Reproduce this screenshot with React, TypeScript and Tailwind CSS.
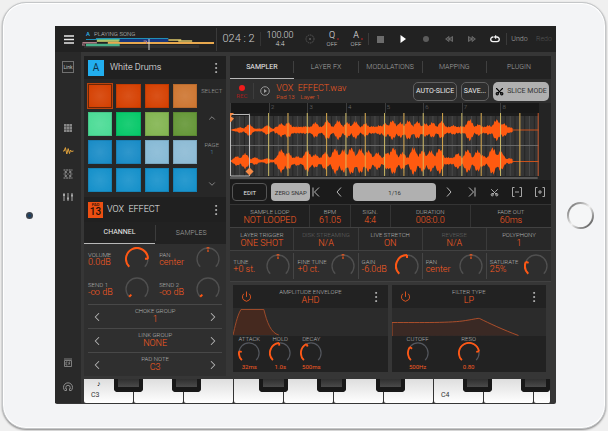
import { useState } from "react";
import { ChevronDown, ChevronLeft, ChevronRight, ChevronUp, EllipsisVertical, Power, Scissors } from "lucide-react";
import clsx from "clsx";

const PADS = [
  "bg-[#d53f00]", "bg-[#d53f00]", "bg-[#d53f00]", "bg-[#cd7530]",
  "bg-[#4adb95]", "bg-[#05c868]", "bg-[#82b450]", "bg-[#649636]",
  "bg-[#188bc6]", "bg-[#188bc6]", "bg-[#86b9d5]", "bg-[#8cbad4]",
  "bg-[#1490ca]", "bg-[#1490ca]", "bg-[#1490ca]", "bg-[#1490ca]",
];

const TOP_PEAKS = [
  [10, 3], [19, 6], [37, 5], [51, 7], [58, 8], [75, 4], [85, 8], [97, 10], [108, 10], [117, 8], [125, 9],
  [135, 7], [142, 4], [149, 5], [155, 7], [162, 10], [170, 8], [178, 10], [187, 9], [195, 7], [202, 8],
  [211, 9], [223, 5], [231, 4], [239, 11], [248, 6], [258, 5], [266, 11], [273, 7], [279, 3],
];
const BOTTOM_PEAKS = [
  [7, 5], [15, 8], [25, 4], [37, 3], [51, 12], [58, 9], [67, 5], [77, 11], [85, 7], [95, 9], [105, 13],
  [113, 12], [121, 14], [130, 13], [138, 11], [147, 9], [157, 9], [163, 14], [172, 9], [183, 14],
  [192, 11], [200, 11], [209, 13], [217, 4], [227, 8], [237, 12], [247, 11], [252, 6], [262, 14], [270, 10], [279, 3],
];

const WHITE_KEYS = ["C3", "", "", "", "", "", "", "C4", "", ""];
const BLACK_KEYS = [30, 88, 175, 233, 292, 379, 437];

function wavePath(peaks: number[][], mid: number) {
  const upper: string[] = [];
  const lower: string[] = [];
  for (let x = 0; x <= 282; x++) {
    let amp = x < 6 ? x / 3 : x > 275 ? (282 - x) / 3 : x < 45 ? 1.5 : 3.5;
    for (const [px, h] of peaks) {
      amp = Math.max(amp, h * Math.exp(-(((x - px) / 4.5) ** 2)));
    }
    const a = amp * (0.9 + 0.16 * Math.sin(x * 2.6));
    const b = amp * (0.9 + 0.16 * Math.cos(x * 2.1));
    upper.push(`${x},${(mid - a).toFixed(1)}`);
    lower.unshift(`${x},${(mid + b).toFixed(1)}`);
  }
  return `M${upper.join("L")}L${lower.join("L")}Z`;
}

function arc(from: number, to: number, r = 11) {
  const point = (v: number) => {
    const a = ((v * 270 - 225) * Math.PI) / 180;
    return `${(12 + r * Math.cos(a)).toFixed(2)} ${(12 + r * Math.sin(a)).toFixed(2)}`;
  };
  return `M${point(from)}A${r} ${r} 0 ${(to - from) * 270 > 180 ? 1 : 0} 1 ${point(to)}`;
}

function Knob({ label, value, center, small }: { label: string; value: number; center?: boolean; small?: boolean }) {
  const [v, setV] = useState(value);
  const a = ((v * 270 - 225) * Math.PI) / 180;
  return (
    <span className={clsx("relative block shrink-0", small ? "size-[22px]" : "size-6")}>
      <svg viewBox="0 0 24 24" fill="none" className="size-full">
        <path d={arc(0, 1)} stroke={small ? "#54575e" : "#505050"} strokeWidth="1.3" />
        {center ? (
          <path d="M12 0v1.6M12 2.6v2.4M10.5 1h3" stroke="#f2581c" strokeWidth="1.2" />
        ) : (
          <>
            {v > 0.02 && <path d={arc(0, v)} stroke="#ff5714" strokeWidth="2" />}
            <path
              d={`M${12 + 11 * Math.cos(a)} ${12 + 11 * Math.sin(a)}L${12 + 8 * Math.cos(a)} ${12 + 8 * Math.sin(a)}`}
              stroke="#ff5714"
              strokeWidth="2"
            />
          </>
        )}
      </svg>
      <input
        type="range"
        min="0"
        max="1"
        step="0.01"
        aria-label={label}
        value={v}
        onChange={(e) => setV(Number(e.target.value))}
        className="absolute inset-0 size-full opacity-0"
      />
    </span>
  );
}

function Info({ label, value, dim, className }: { label: string; value: string; dim?: boolean; className?: string }) {
  return (
    <div className={clsx("flex flex-col items-center justify-center whitespace-nowrap", className)}>
      <span className={clsx("text-[6px] leading-[8px]", dim ? "text-[#646464]" : "text-[#b6b6b6]")}>{label}</span>
      <span className="text-[9px] leading-[9px] text-[#fb5c22]">{value}</span>
    </div>
  );
}

function KnobCell({ label, text, value, center, className }: { label: string; text: string; value: number; center?: boolean; className?: string }) {
  return (
    <div className={clsx("flex items-center justify-between whitespace-nowrap", className)}>
      <div className="w-0">
        <div className="text-[6px] leading-[7px] text-[#b6b6b6]">{label}</div>
        <div className="text-[9px] leading-[9px] text-[#fb5c22]">{text}</div>
      </div>
      <Knob label={label} value={value} center={center} />
    </div>
  );
}

function Stepper({ label, values }: { label: string; values: string[] }) {
  const [i, setI] = useState(0);
  const move = (d: number) => setI((i + d + values.length) % values.length);
  return (
    <div className="mx-1 flex h-6 items-center justify-between border-t border-[#484848] px-[2px] text-[#b5b5b5]">
      <button aria-label={`Previous ${label}`} onClick={() => move(-1)}>
        <ChevronLeft className="size-[14px]" strokeWidth={1.8} />
      </button>
      <Info label={label} value={values[i]} className="pb-[2px]" />
      <button aria-label={`Next ${label}`} onClick={() => move(1)}>
        <ChevronRight className="size-[14px]" strokeWidth={1.8} />
      </button>
    </div>
  );
}

function MoreButton({ label }: { label: string }) {
  return (
    <button aria-label={label} className="text-[#c8c8c8]">
      <EllipsisVertical className="size-[14px]" strokeWidth={1.4} />
    </button>
  );
}

function SideRail() {
  return (
    <nav className="flex w-[26px] shrink-0 flex-col items-center bg-[#292929] pt-[9px] pb-[10px] text-[#a8a8a8]">
      <button className="h-3 w-3 border border-[#707070] text-[5px] leading-[10px] font-normal text-[#bdbdbd]">Link</button>
      <div className="mt-[49px] flex flex-col items-center gap-[11px]">
        <button aria-label="Pads">
          <svg viewBox="0 0 12 12" className="size-3" fill="#868686">
            <rect x="2" y="2" width="8" height="8" />
            <path d="M4.5 2v8M7.5 2v8M2 4.5h8M2 7.5h8" stroke="#404040" strokeWidth=".5" />
          </svg>
        </button>
        <button aria-label="Sampler">
          <svg viewBox="0 0 12 12" className="size-3" fill="none" stroke="#e0a23c" strokeWidth="1" strokeLinejoin="round">
            <path d="M1 6h1.200L3.400 2.600l1.400 6.400L6.200 3.600 7.500 8.500 8.500 5l1 1.500L11.500 6" />
          </svg>
        </button>
        <button aria-label="Patterns">
          <svg viewBox="0 0 12 12" className="size-3" fill="none" stroke="currentColor" strokeWidth=".9">
            <path d="M1.500 2h9M1.500 10h9" strokeDasharray="2 .6" />
            <path d="M1.500 6H4M8 6h2.500M3 3.500h1.500v1.200H3zM7.500 3.500H9v1.200H7.500zM3 7.300h1.500v1.200H3zM7.500 7.300H9v1.200H7.500zM5.200 6h1.600" strokeWidth=".7" />
          </svg>
        </button>
        <button aria-label="Mixer">
          <svg viewBox="0 0 12 12" className="size-3" fill="none" stroke="currentColor" strokeWidth="1">
            <path d="M2 2v8M6 2v8M10 2v8" />
            <path d="M1 4h2M5 7.500h2M9 4.500h2" strokeWidth="2" />
          </svg>
        </button>
      </div>
      <div className="mt-auto flex flex-col items-center gap-3">
        <button aria-label="Effects">
          <svg viewBox="0 0 12 12" className="size-3" fill="none" stroke="#888" strokeWidth=".9">
            <path d="M2.500 3.500h7v6h-7zM2 2h8M5.500 5H4v3h1.500M7 5v3M7 5h1.200M7 6.500h1" />
          </svg>
        </button>
        <button aria-label="Settings">
          <svg viewBox="0 0 12 12" className="size-3" fill="none" stroke="#999" strokeWidth=".9">
            <path d="M3 9.700A4.500 4.500 0 1 1 9 9.700M3.800 8V6.500a2.200 2.200 0 0 1 4.400 0V8M2.800 9.500h1.700V7.500M9.200 9.500H7.500V7.500" />
          </svg>
        </button>
      </div>
    </nav>
  );
}

function TopBar() {
  return (
    <header className="flex h-[26px] items-center bg-[#222222] text-[#cdcdcd]">
      <button aria-label="Menu" className="flex w-[27px] shrink-0 justify-center">
        <svg viewBox="0 0 10 9" className="h-[9px] w-[10px]" stroke="#e8e8e8" strokeWidth="1.4">
          <path d="M0 1h10M0 4.500h10M0 8h10" />
        </svg>
      </button>
      <div className="h-[23px] w-[135px] shrink-0 border-r border-[#3a3a3a]">
        <div className="pt-[2px] pl-1 text-[6px] leading-[8px] text-[#c4c4c4]">
          <b className="mr-1 font-medium text-[#2bb0ec]">A</b>PLAYING SONG
        </div>
        <svg viewBox="0 0 135 12" preserveAspectRatio="none" className="h-3 w-full" fill="none">
          <path d="M2 8.500h116" stroke="#303030" strokeWidth="3" />
          <path d="M4 1.500h12M14 .5h73" stroke="#1f8fb8" strokeWidth="1.200" />
          <path d="M38 2.500h49" stroke="#18367c" strokeWidth="3" />
          <path d="M15 2.200h23" stroke="#58b888" strokeWidth="2.600" />
          <path d="M15 3h22" stroke="#d3c560" strokeWidth="1.400" />
          <path d="M87 2h13M97 3h14" stroke="#dcc668" strokeWidth="1.600" />
          <path d="M1 4h14v1.600H1z" fill="#b27f88" />
          <path d="M26 5h107" stroke="#e8a84e" strokeWidth="2.200" />
          <path d="M4 7h34" stroke="#48b088" strokeWidth="2.400" />
          <path d="M0 4v3h3M62 3h3v3" stroke="#b88794" />
          <path d="M67.500 1v11" stroke="#e4e4e4" strokeWidth=".9" />
        </svg>
      </div>
      <div className="w-[44px] shrink-0 border-r border-[#343434] text-center text-[11px] leading-[14px] whitespace-nowrap">024 : 2</div>
      <div className="flex w-[38px] shrink-0 flex-col items-center text-[#dddddd]">
        <span className="text-[9px] leading-[9px]">100.00</span>
        <span className="text-[7px] leading-[8px]">4:4</span>
      </div>
      <button aria-label="Metronome" className="flex w-[21px] shrink-0 justify-center">
        <svg viewBox="0 0 10 10" className="size-[10px]" fill="none" stroke="#575757">
          <circle cx="5" cy="5" r="4" strokeDasharray="1.500 .8" />
          <circle cx="5" cy="5" r=".8" fill="#888" stroke="none" />
        </svg>
      </button>
      {["Q", "A"].map((k) => (
        <button key={k} className="relative flex w-6 shrink-0 flex-col items-center">
          <span className="text-[9px] leading-[10px] text-[#e8e8e8]">{k}</span>
          <span className="text-[6px] leading-[8px]">OFF</span>
          <span className="absolute top-2 right-[5px] size-[2px] rounded-full bg-[#8e2222]" />
        </button>
      ))}
      <div className="grid h-3 flex-1 grid-cols-6 items-center justify-items-center border-x border-[#3a3a3a]">
        <button aria-label="Stop" className="size-[7px] bg-[#6c6c6c]" />
        <button aria-label="Play">
          <svg viewBox="0 0 8 8" className="size-2" fill="#fff"><path d="M1.500 0 7 4 1.500 8z" /></svg>
        </button>
        <button aria-label="Record" className="size-[6px] rounded-full bg-[#5c5c5c]" />
        <button aria-label="Rewind">
          <svg viewBox="0 0 8 6" className="h-[6px] w-2" fill="#444" stroke="#777" strokeWidth=".8"><path d="M4 .5v5L.6 3zM7.500.5v5L4 3z" /></svg>
        </button>
        <button aria-label="Forward">
          <svg viewBox="0 0 8 6" className="h-[6px] w-2" fill="#444" stroke="#777" strokeWidth=".8"><path d="M.5.5v5L4 3zM4 .5v5L7.400 3z" /></svg>
        </button>
        <button aria-label="Loop">
          <svg viewBox="0 0 10 8" className="h-2 w-[10px]" fill="none" stroke="#f4f4f4" strokeWidth="1.300">
            <path d="M3.500 2H3a2.300 2.300 0 0 0 0 4.600h4A2.300 2.300 0 0 0 7 2H5" />
            <path d="M6 0 4 2l2 2z" fill="#f4f4f4" strokeWidth=".3" />
          </svg>
        </button>
      </div>
      <button className="w-[25px] shrink-0 text-[7px] text-[#b0b0b0]">Undo</button>
      <button disabled className="w-6 shrink-0 text-[7px] text-[#545454]">Redo</button>
    </header>
  );
}

function LeftPanel() {
  const [pad, setPad] = useState(0);
  return (
    <section className="min-w-0 bg-[#2f2f2f]">
      <div className="flex h-[23px] items-center bg-[#202020] pr-[3px] pl-1">
        <span className="flex size-4 items-center justify-center bg-[#22aeee] text-[10px] font-normal text-[#10344a]">A</span>
        <h2 className="ml-[6px] flex-1 text-[9px] text-[#f0f0f0]">White Drums</h2>
        <MoreButton label="Kit options" />
      </div>
      <div className="flex bg-[#272727] py-[5px] pl-1">
        <div className="grid flex-1 grid-cols-4 gap-1">
          {PADS.map((color, i) => (
            <button
              key={i}
              aria-label={`Pad ${i + 1}`}
              onClick={() => setPad(i)}
              className={clsx(
                "h-6 bg-radial from-white/10 to-transparent",
                color,
                pad === i ? "border border-[#6a2608] outline outline-[#b8440e]" : "border border-black/10"
              )}
            />
          ))}
        </div>
        <div className="flex w-[29px] flex-col items-center text-[6px] leading-[7px] text-[#a2a2a2]">
          <button className="mt-[2px] h-[8px]">SELECT</button>
          <button aria-label="Page up" className="mt-[19px]"><ChevronUp className="size-[10px]" strokeWidth={1.8} /></button>
          <span className="mt-[18px]">PAGE</span>
          <span className="text-[#5197b2]">1</span>
          <button aria-label="Page down" className="mt-6"><ChevronDown className="size-[10px]" strokeWidth={1.8} /></button>
        </div>
      </div>
      <div className="flex h-[25px] items-center bg-[#202020] pr-[3px] pl-1">
        <span className="flex h-4 w-[15px] flex-col items-center bg-[#ec4f12] font-medium text-[#251008]">
          <span className="text-[4px] leading-[5px]">PAD</span>
          <span className="text-[10px] leading-[10px]">13</span>
        </span>
        <h2 className="ml-1 flex-1 text-[9px] text-[#ececec]">VOX&nbsp; EFFECT</h2>
        <MoreButton label="Pad options" />
      </div>
      <div className="grid h-[22px] grid-cols-2 bg-[#222222] text-[7px]">
        <button className="border-b border-[#b8b8b8] font-normal text-[#eeeeee]">CHANNEL</button>
        <button className="my-[3px] border-l border-[#3c3c3c] text-[#a0a0a0]">SAMPLES</button>
      </div>
      <div className="grid grid-cols-2">
        <KnobCell label="VOLUME" text="0.0dB" value={0.83} className="h-[30px] pr-[6px] pl-1" />
        <KnobCell label="PAN" text="center" value={0.5} center className="h-[30px] pr-[6px] pl-1" />
        <KnobCell label="SEND 1" text="-∞ dB" value={0} className="h-[30px] pr-[6px] pl-1" />
        <KnobCell label="SEND 2" text="-∞ dB" value={0} className="h-[30px] pr-[6px] pl-1" />
      </div>
      <Stepper label="CHOKE GROUP" values={["1", "2", "3", "4"]} />
      <Stepper label="LINK GROUP" values={["NONE", "1", "2"]} />
      <Stepper label="PAD NOTE" values={["C3", "C#3", "D3"]} />
    </section>
  );
}

function Waveform() {
  const lines = Array.from({ length: 64 }, (_, i) => i * 4.82);
  const slices = Array.from({ length: 14 }, (_, i) => (i + 2) * 19.28);
  return (
    <div className="bg-[#242424] pr-3">
      <div className="grid h-[10px] grid-cols-8 bg-[#181818] text-[6px] leading-[7px] text-[#707070]">
        {[1, 2, 3, 4, 5, 6, 7, 8].map((n) => (
          <span key={n} className="border-l border-[#3c3c3c] pl-px">{n > 1 ? n : ""}</span>
        ))}
      </div>
      <svg viewBox="0 0 308 67" preserveAspectRatio="none" className="h-[67px] w-full" fill="none">
        <path d="M0 0h308v63H0z" fill="#353535" />
        <path d="M0 0h308v3H0z" fill="#1c1c1c" />
        {lines.map((x, i) => (
          <path key={x} d={`M${x} ${i % 4 ? 3 : 0}v60`} stroke={i % 2 ? "#262626" : "#4a4a4a"} strokeWidth="1" />
        ))}
        <path d="M0 32.500h308" stroke="#686868" />
        <path d="M280 17h28M280 48.500h28" stroke="#c9511b" />
        <path d={wavePath(TOP_PEAKS, 17)} fill="#ff5a10" />
        <path d={wavePath(BOTTOM_PEAKS, 48)} fill="#ff5a10" />
        {slices.map((x, i) => (
          <path key={x} d={`M${x} 0v63`} stroke={i % 2 ? "#e2b04a" : "#d8c468"} strokeWidth=".9" />
        ))}
        <path d="M.5 1.500h19V63H.5z" stroke="#c9c9c9" strokeWidth=".9" />
        <path d="M0 0h4L0 4zM0 3l4 2.500L1 9H0z" fill="#f88a45" />
        <path d="M19.500 54.500l4 4-4 4-4-4z" fill="#f88a45" />
        <path d="M307.500 0v63" stroke="#c4562c" />
        <path d="M0 65h307" stroke="#888" />
      </svg>
    </div>
  );
}

function EditBar() {
  const icon = "h-3 w-[10px]";
  return (
    <div className="flex h-6 items-center bg-[#1b1b1b] px-[2px] text-[6px] text-[#b8b8b8]">
      <button className="h-[18px] w-[35px] shrink-0 rounded-[4px] border border-[#555555] font-normal text-[#e4e4e4]">EDIT</button>
      <button className="ml-1 h-[18px] w-[39px] shrink-0 rounded-[4px] bg-[#b0b0b0] font-normal whitespace-nowrap text-[#333333]">ZERO SNAP</button>
      <div className="flex w-[43px] shrink-0 items-center justify-between pr-[9px] pl-px">
        <button aria-label="First slice">
          <svg viewBox="0 0 10 12" className={icon} fill="none" stroke="currentColor"><path d="M2 1.500v9M8 1.500 3.500 6 8 10.500" /></svg>
        </button>
        <button aria-label="Previous slice">
          <svg viewBox="0 0 10 12" className={icon} fill="none" stroke="currentColor"><path d="M7 1.500 3 6l4 4.500" /></svg>
        </button>
      </div>
      <button className="h-[18px] flex-1 rounded-[4px] bg-[#b0b0b0] text-[6px] font-normal text-[#333333]">1/16</button>
      <div className="mr-[4px] ml-[8px] flex w-[101px] shrink-0 items-center justify-between">
        <button aria-label="Next slice">
          <svg viewBox="0 0 10 12" className={icon} fill="none" stroke="currentColor"><path d="m3 1.500 4 4.500-4 4.500" /></svg>
        </button>
        <button aria-label="Last slice">
          <svg viewBox="0 0 10 12" className={icon} fill="none" stroke="currentColor"><path d="M8 1.500v9M2 1.500 6.500 6 2 10.500" /></svg>
        </button>
        <button aria-label="Cut"><Scissors className="size-[9px] -rotate-90" strokeWidth={2.5} /></button>
        <button aria-label="Remove slice">
          <svg viewBox="0 0 10 12" className={icon} fill="none" stroke="currentColor" strokeWidth=".9"><path d="M2.500 1.500h-2v9h2M7.500 1.500h2v9h-2M3 6h4" /></svg>
        </button>
        <button aria-label="Add slice">
          <svg viewBox="0 0 10 12" className={icon} fill="none" stroke="currentColor" strokeWidth=".9"><path d="M2.500 1.500h-2v9h2M7.500 1.500h2v9h-2M3 6h4M5 4v4" /></svg>
        </button>
      </div>
    </div>
  );
}

function ModuleCard({ label, value, children, knobs }: { label: string; value: string; children: React.ReactNode; knobs: React.ReactNode }) {
  return (
    <article className="bg-[#222222]">
      <div className="flex h-[23px] items-center justify-between pr-[5px] pl-2">
        <button aria-label={`Toggle ${label}`} className="text-[#e8571f]">
          <Power className="size-[11px]" strokeWidth={2} />
        </button>
        <Info label={label} value={value} />
        <MoreButton label={`${label} options`} />
      </div>
      <svg viewBox="0 0 155 28" preserveAspectRatio="none" className="h-7 w-full bg-[#2b2b2b]" fill="none">
        {children}
      </svg>
      <div className="flex pb-[2px]">{knobs}</div>
    </article>
  );
}

function SmallKnob({ label, text, value, className }: { label: string; text: string; value: number; className?: string }) {
  return (
    <div className={clsx("flex flex-col items-center text-[6px]", className)}>
      <span className="leading-[6px] text-[#b6b6b6]">{label}</span>
      <Knob label={label} value={value} small />
      <span className="leading-[6px] font-normal text-[#f25a22]">{text}</span>
    </div>
  );
}

function RightPanel() {
  const [tab, setTab] = useState("SAMPLER");
  return (
    <section className="flex min-w-0 flex-col bg-[#2e2e2e]">
      <div className="grid h-[23px] grid-cols-5 bg-[#222222] text-[7px]">
        {["SAMPLER", "LAYER FX", "MODULATIONS", "MAPPING", "PLUGIN"].map((name) => (
          <button
            key={name}
            onClick={() => setTab(name)}
            className={clsx("flex items-center border-b", tab === name ? "border-[#b8b8b8] font-normal text-[#eeeeee]" : "border-transparent text-[#a4a4a4]")}
          >
            <span className={clsx("flex-1 leading-[12px]", name !== "PLUGIN" && "border-r border-[#404040]")}>{name}</span>
          </button>
        ))}
      </div>
      <div className="flex h-6 items-center">
        <button className="flex w-6 flex-col items-center gap-px border-r border-[#3d3d3d] text-[6px] leading-[7px] font-normal text-[#a31e1e]">
          <span className="mt-[2px] size-[6px] rounded-full bg-[#f01c1c]" />
          REC
        </button>
        <button aria-label="Preview" className="ml-[6px]">
          <svg viewBox="0 0 10 10" className="size-[10px]" fill="none" stroke="#a0a0a0" strokeWidth=".9">
            <circle cx="5" cy="5" r="4.300" />
            <path d="M4 3v4l3-2z" fill="#a0a0a0" stroke="none" />
          </svg>
        </button>
        <div className="ml-[6px] flex-1 whitespace-nowrap text-[#f25a22]">
          <div className="text-[9px] leading-[10px]">VOX&nbsp; EFFECT.wav</div>
          <div className="text-[6px] leading-[7px]">Pad 13 &nbsp;&nbsp; Layer 1</div>
        </div>
        <button className="h-[19px] w-[44px] rounded-[5px] border border-[#606060] text-[7px] font-normal whitespace-nowrap text-[#e8e8e8]">AUTO-SLICE</button>
        <button className="ml-1 h-[19px] w-[28px] rounded-[5px] border border-[#606060] text-[7px] font-normal text-[#e8e8e8]">SAVE...</button>
        <button className="mr-[2px] ml-1 flex h-[19px] w-[56px] items-center justify-center gap-[3px] rounded-[5px] bg-[#b0b0b0] text-[7px] font-normal whitespace-nowrap text-[#333333]">
          <Scissors className="size-[9px] -rotate-90 text-black" strokeWidth={3} />
          SLICE MODE
        </button>
      </div>
      <Waveform />
      <EditBar />
      <div className="grid h-[23px] grid-cols-8 divide-x divide-[#343434] border-t border-[#343434] bg-[#202020]">
        <Info label="SAMPLE LOOP" value="NOT LOOPED" className="col-span-2" />
        <Info label="BPM" value="61.05" />
        <Info label="SIGN." value="4:4" />
        <Info label="DURATION" value="008:0.0" className="col-span-2" />
        <Info label="FADE OUT" value="60ms" className="col-span-2" />
      </div>
      <div className="grid h-6 grid-cols-5 divide-x divide-[#3b3b3b] border-y border-[#414141] bg-[#282828]">
        <Info label="LAYER TRIGGER" value="ONE SHOT" />
        <Info label="DISK STREAMING" value="N/A" dim />
        <Info label="LIVE STRETCH" value="ON" />
        <Info label="REVERSE" value="N/A" dim />
        <Info label="POLYPHONY" value="1" />
      </div>
      <div className="grid h-[31px] grid-cols-5 divide-x divide-[#454545] border-b border-[#414141] py-[2px]">
        <KnobCell label="TUNE" text="+0 st." value={0.5} center className="px-[3px]" />
        <KnobCell label="FINE TUNE" text="+0 ct." value={0.5} center className="px-[3px]" />
        <KnobCell label="GAIN" text="-6.0dB" value={0.5} className="px-[3px]" />
        <KnobCell label="PAN" text="center" value={0.5} center className="px-[3px]" />
        <KnobCell label="SATURATE" text="25%" value={0.25} className="px-[3px]" />
      </div>
      <div className="grid flex-1 grid-cols-2 items-start gap-1 bg-[#363636] pt-[3px] pr-[5px] pl-[3px]">
        <ModuleCard
          label="AMPLITUDE ENVELOPE"
          value="AHD"
          knobs={
            <>
              <SmallKnob label="ATTACK" text="32ms" value={0.2} className="w-8" />
              <SmallKnob label="HOLD" text="1.0s" value={0.48} className="w-[30px]" />
              <SmallKnob label="DECAY" text="500ms" value={0.4} className="w-[32px]" />
            </>
          }
        >
          <path d="M0 27C2 19 4 8 8 1.500h23C34 14 38 25 46 27" fill="#45291f" stroke="#a84e2c" strokeWidth=".9" />
        </ModuleCard>
        <ModuleCard
          label="FILTER TYPE"
          value="LP"
          knobs={
            <>
              <SmallKnob label="CUTOFF" text="500Hz" value={0.3} className="w-[52px]" />
              <SmallKnob label="RESO" text="0.80" value={0.8} className="w-[50px]" />
            </>
          }
        >
          <path d="M0 28V14.500C30 14.500 60 15 74 12.500 84 11 86 10 88 10.500 97 15 112 22 127 27.500" fill="#3a2924" stroke="#b8532c" strokeWidth=".9" />
        </ModuleCard>
      </div>
    </section>
  );
}

function Keyboard() {
  return (
    <div className="relative mr-[5px] ml-[3px] flex h-6">
      {WHITE_KEYS.map((note, i) => (
        <button
          key={i}
          aria-label={`White key ${i + 1}`}
          className={clsx(
            "relative rounded-b-[2px] border-r border-[#333333] bg-linear-to-b from-[#dedede] to-white pt-[8px] pl-[7px] text-left text-[7px] leading-[10px] font-normal text-[#333333]",
            i === 9 ? "w-[17px]" : "flex-1"
          )}
        >
          {note}
          {i === 0 && <span className="absolute top-[2px] left-[13px] text-[7px] leading-[7px] text-black">♪</span>}
        </button>
      ))}
      {BLACK_KEYS.map((x) => (
        <button
          key={x}
          aria-label="Black key"
          style={{ left: `${(x / 467) * 100}%` }}
          className="absolute top-0 h-[13px] w-[29px] rounded-b-[4px] border-x-4 border-b-[5px] border-[#181818] bg-linear-to-b from-[#303030] to-[#4a4a4a]"
        />
      ))}
    </div>
  );
}

export default function App() {
  return (
    <div className="flex min-h-screen bg-[#f0f0f0] p-[2px] font-[Roboto,'Liberation_Sans',sans-serif] font-light">
      <div className="flex flex-1 items-stretch rounded-[24px] border border-[#c4c6c8] bg-[#f3f4f6] pt-[23px] pb-[24px] shadow-[inset_0_0_0_1px_#ffffff,0_1px_2px_#888888]">
        <div className="flex w-[52px] shrink-0 items-center justify-center">
          <span className="size-[7px] rounded-full border-2 border-[#39414c] bg-[#14406a]" />
        </div>
        <main className="flex min-w-0 flex-1 flex-col rounded-[2px] bg-[#363636] pb-px">
          <TopBar />
          <div className="flex flex-1">
            <SideRail />
            <div className="flex min-w-0 flex-1 flex-col">
              <div className="grid flex-1 grid-cols-[142fr_320fr] gap-1 pt-1 pr-[5px] pb-[3px] pl-[3px]">
                <LeftPanel />
                <RightPanel />
              </div>
              <Keyboard />
            </div>
          </div>
        </main>
        <div className="flex w-[49px] shrink-0 items-center justify-center">
          <button aria-label="Home" className="size-[27px] rounded-full bg-linear-to-br from-[#555555] via-[#f2f2f2] to-[#333333] p-[2px]">
            <span className="block size-full rounded-full bg-[#f5f6f7]" />
          </button>
        </div>
      </div>
    </div>
  );
}
